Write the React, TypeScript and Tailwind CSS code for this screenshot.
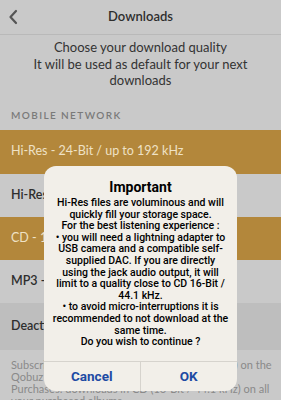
const dialogLines = [
  "Hi-Res files are voluminous and will",
  "quickly fill your storage space.",
  "For the best listening experience :",
  "• you will need a lightning adapter to",
  "USB camera and a compatible self-",
  "supplied DAC. If you are directly",
  "using the jack audio output, it will",
  "limit to a quality close to CD 16-Bit /",
  "44.1 kHz.",
  "• to avoid micro-interruptions it is",
  "recommended to not download at the",
  "same time.",
  "Do you wish to continue ?",
];

const footerLines = [
  "Subscription: downloads in Hi-Res (to 192 kHz) on the",
  "Qobuz catalog, if available in Hi-Res, or in",
  "Purchases: downloads in CD (16-Bit / 44.1 kHz) on all",
  "your purchased albums.",
];

export default function App() {
  return (
    <div className="relative w-[281px] h-[400px] overflow-hidden bg-[#c9c9c9] font-['Lato',sans-serif] text-[#2e2e2e]">
      <div className="flex h-[35px] items-center border-b border-[#b9b9b9] px-2">
        <svg width="10" height="16" viewBox="0 0 10 16" className="shrink-0">
          <path d="M8 2 L2.5 8 L8 14" fill="none" stroke="#555" strokeWidth="2.2" strokeLinecap="round" strokeLinejoin="round" />
        </svg>
        <div className="flex-1 pr-[10px] text-center text-[13px] font-semibold">Downloads</div>
      </div>

      <div className="px-3 pt-[4px] text-center text-[13px] leading-[16.5px] text-[#333]">
        Choose your download quality
        <br />
        It will be used as default for your next downloads
      </div>

      <div className="mt-[12px] flex h-[29px] items-center px-[11px] text-[10px] font-semibold tracking-[0.14em] text-[#7a7a7a]">
        MOBILE NETWORK
      </div>

      <div className="flex h-[44px] items-center bg-[#b3873b] px-[11px] text-[12.5px] text-[#efe2c6]">
        Hi-Res - 24-Bit / up to 192 kHz
      </div>
      <div className="flex h-[43px] items-center px-[11px] text-[12.5px] font-semibold">
        Hi-Res - 24-Bit / up to 96 kHz
      </div>
      <div className="flex h-[43px] items-center bg-[#b3873b] px-[11px] text-[12.5px] text-[#efe2c6]">
        CD - 16-Bit / 44.1 kHz
      </div>
      <div className="flex h-[43px] items-center px-[11px] text-[12.5px] font-semibold">
        MP3 - 320 kbps
      </div>
      <div className="flex h-[47px] items-center bg-[#bebebe] px-[11px] text-[12.5px] font-semibold">
        Deactivated
      </div>

      <div className="px-[11px] pt-[9px] text-[11px] leading-[12px] text-[#8a8a8a]">
        {footerLines.map((l) => (
          <div key={l} className="whitespace-nowrap">{l}</div>
        ))}
      </div>

      <div className="absolute left-[44px] top-[166px] w-[193px] overflow-hidden rounded-[12px] bg-[#f2efe9] font-['Roboto',sans-serif] text-black">
        <div className="px-[4px] pt-[12px] pb-[13px] text-center">
          <div className="text-[14px] font-bold leading-[18px]">Important</div>
          <div className="mt-[1px] text-[10.5px] font-medium leading-[11.6px]">
            {dialogLines.map((l) => (
              <div key={l} className="whitespace-nowrap">{l}</div>
            ))}
          </div>
        </div>
        <div className="grid h-[30px] grid-cols-2 border-t border-[#d6d3cd] text-[13.5px] font-bold text-[#1d4aa3]">
          <div className="flex items-center justify-center border-r border-[#d6d3cd]">Cancel</div>
          <div className="flex items-center justify-center">OK</div>
        </div>
      </div>
    </div>
  );
}
